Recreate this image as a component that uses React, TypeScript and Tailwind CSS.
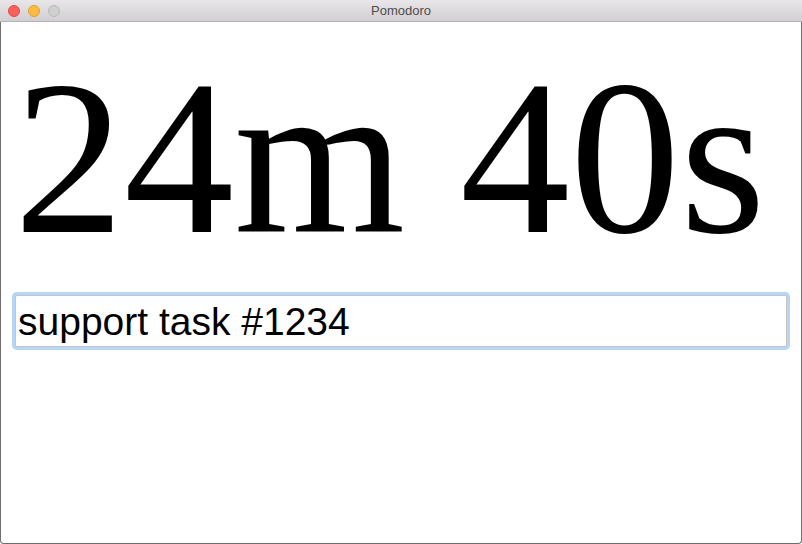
import React from 'react';

// Pomodoro window: title bar, big countdown, task input
export default function App() {
  return (
    <div className="w-[802px] h-[544px] bg-white overflow-hidden flex flex-col">
      {/* Title bar */}
      <div className="relative h-[22px] shrink-0 bg-gradient-to-b from-[#e8e6e8] to-[#d1cfd1] border-b border-[#b5b3b5] flex items-center">
        <div className="flex items-center gap-[8px] pl-[8px]">
          <span className="w-[12px] h-[12px] rounded-full bg-[#fc605c] border border-[#de4a45]" />
          <span className="w-[12px] h-[12px] rounded-full bg-[#fdbc40] border border-[#dea235]" />
          <span className="w-[12px] h-[12px] rounded-full bg-[#d0d0d0] border border-[#b9b9b9]" />
        </div>
        <div className="absolute inset-0 flex items-center justify-center text-[13px] text-[#4d4d4d] font-['Helvetica','Liberation_Sans',sans-serif]">
          Pomodoro
        </div>
      </div>

      {/* Content */}
      <div className="flex-1 border-l border-r border-b border-[#6e6e6e] rounded-b-[4px] flex flex-col">
        <div className="pt-[26px] pl-[13px] text-[220px] leading-none text-black font-['Times_New_Roman','Liberation_Serif',serif] whitespace-nowrap">
          24m 40s
        </div>
        <div className="pt-[27px] px-[14px]">
          <input
            readOnly
            value="support task #1234"
            className="w-full h-[52px] border border-[#c4c4c4] rounded-[2px] ring-[3px] ring-[#b6d6f8] outline-none px-[2px] pt-[3px] text-[39px] text-black font-['Helvetica','Liberation_Sans',sans-serif] bg-white"
          />
        </div>
      </div>
    </div>
  );
}
